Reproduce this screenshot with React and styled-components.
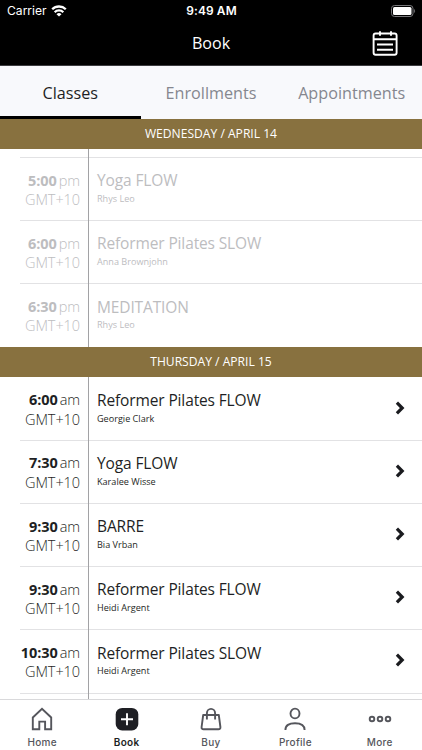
import React from "react";
import styled, { createGlobalStyle } from "styled-components";

const GlobalStyle = createGlobalStyle`
  * { box-sizing: border-box; }
  body { margin: 0; background: #fff; overflow: hidden; }
`;

const Screen = styled.div`
  width: 422px;
  height: 750px;
  display: flex;
  flex-direction: column;
  overflow: hidden;
  background: #fff;
  color: #1e1f24;
  font-family: "Open Sans", sans-serif;
`;

const StatusBar = styled.div`
  height: 22px;
  flex: none;
  display: grid;
  grid-template-columns: 1fr auto 1fr;
  align-items: center;
  padding: 0 6px 0 7px;
  background: #000;
  color: #fff;
  font: 400 12.1px/22px Inter, sans-serif;
`;

const Carrier = styled.div`
  display: flex;
  align-items: center;
  gap: 4px;
`;

const Clock = styled.div`
  font-size: 11.9px;
  font-weight: 600;
  letter-spacing: 0.15px;
`;

const Battery = styled.svg`
  justify-self: end;
  margin-bottom: 1px;
`;

const NavBar = styled.header`
  height: 44px;
  flex: none;
  display: grid;
  grid-template-columns: 1fr auto 1fr;
  align-items: center;
  padding: 0 23px;
  background: #000;
  color: #fff;
  border-bottom: 1px solid #3c3c40;
`;

const Title = styled.h1`
  grid-column: 2;
  margin: 0 0 1px;
  font-size: 16.1px;
  font-weight: 400;
  line-height: 22px;
`;

const CalendarButton = styled.button`
  justify-self: end;
  display: flex;
  padding: 0;
  border: 0;
  background: none;
`;

const Tabs = styled.nav`
  height: 52.5px;
  flex: none;
  display: grid;
  grid-template-columns: repeat(3, 1fr);
  background: #f8f9fc;
`;

const Tab = styled.div`
  display: flex;
  justify-content: center;
  padding-top: 15px;
  font-size: 16.2px;
  line-height: 24px;
  color: ${(p) => (p.$active ? "#1e1f24" : "#85878f")};
  border-bottom: 3px solid ${(p) => (p.$active ? "#000" : "transparent")};
`;

const DayHeader = styled.h2`
  height: 30.5px;
  flex: none;
  margin: 0;
  background: #88713f;
  color: #fff;
  text-align: center;
  font-size: 12.1px;
  font-weight: 400;
  line-height: 30px;
`;

const Schedule = styled.main`
  flex: 1;
  min-height: 0;
  overflow: hidden;
`;

const Row = styled.div`
  height: ${(p) => p.$height || 63.1}px;
  display: grid;
  grid-template-columns: 89px 1fr 34px;
  background: ${(p) =>
    p.$noRule ? "none" : "linear-gradient(#e2e2e4, #e2e2e4) 20px 0 / 402px 1px no-repeat"};
  color: ${(p) => (p.$past ? "#bdbdbf" : "#1e1f24")};
`;

const TimeCell = styled.div`
  padding: 13.3px 8px 0 0;
  border-right: 1px solid #a2a2a5;
  text-align: right;
  font-size: 14.5px;
  letter-spacing: -0.08px;
  font-weight: 300;
  line-height: 19.3px;
  white-space: nowrap;
`;

const Hour = styled.span`
  font-weight: 700;
  margin-right: 2px;
`;

const Details = styled.div`
  padding: 13.1px 0 0 8px;
`;

const ClassName = styled.div`
  font-size: 15.5px;
  letter-spacing: -0.13px;
  line-height: 20px;
`;

const Teacher = styled.div`
  padding-top: 0.7px;
  font-size: 9.1px;
  line-height: 16px;
`;

const Arrow = styled.svg`
  margin-top: 24px;
  margin-left: 7px;
`;

const TabBar = styled.nav`
  height: 51px;
  flex: none;
  display: grid;
  grid-template-columns: repeat(5, 1fr);
  border-top: 1px solid #d9d9db;
  background: #fff;
`;

const TabItem = styled.div`
  display: flex;
  flex-direction: column;
  align-items: center;
  padding-top: 7px;
  color: ${(p) => (p.$active ? "#1e1f24" : "#55565c")};
  font: ${(p) => (p.$active ? 600 : 500)} 10px/14px Inter, sans-serif;
  letter-spacing: 0.3px;
`;

const TabIcon = styled.svg`
  margin-bottom: 4px;
  fill: none;
  stroke: currentColor;
  stroke-width: 1.9;
`;

const icons = {
  Home: <path d="M2.8 10.5 12 1.7l9.2 8.8v11.8h-6.1v-7.7H9.3v7.7H2.8z" />,
  Book: (
    <>
      <rect x=".7" y=".9" width="22.6" height="22.6" rx="6.5" fill="currentColor" stroke="none" />
      <path d="M12 6.2v12M6 12.2h12" stroke="#fff" />
    </>
  ),
  Buy: (
    <>
      <path d="M4.2 8h15.6l1.6 12q.3 2.300-2 2.300H4.600q-2.300 0-2-2.300z" strokeLinejoin="round" />
      <path d="M7.900 12.500V6.200a4.100 4.300 0 0 1 8.200 0v6.300" />
    </>
  ),
  Profile: (
    <>
      <ellipse cx="12" cy="6.5" rx="4.5" ry="4.9" />
      <path d="M2.4 23c0-4.600 3.500-6.800 9.600-6.800s9.600 2.200 9.600 6.800" />
    </>
  ),
  More: (
    <>
      <circle cx="4" cy="12" r="2.3" />
      <circle cx="12" cy="12" r="2.3" />
      <circle cx="20" cy="12" r="2.3" />
    </>
  ),
};

const wednesday = [
  ["5:00", "pm", "Yoga FLOW", "Rhys Leo"],
  ["6:00", "pm", "Reformer Pilates SLOW", "Anna Brownjohn"],
  ["6:30", "pm", "MEDITATION", "Rhys Leo"],
];

const thursday = [
  ["6:00", "am", "Reformer Pilates FLOW", "Georgie Clark"],
  ["7:30", "am", "Yoga FLOW", "Karalee Wisse"],
  ["9:30", "am", "BARRE", "Bia Vrban"],
  ["9:30", "am", "Reformer Pilates FLOW", "Heidi Argent"],
  ["10:30", "am", "Reformer Pilates SLOW", "Heidi Argent"],
];

function ClassRow({ item, past, noRule }) {
  const [hour, period, name, teacher] = item;
  return (
    <Row $past={past} $noRule={noRule}>
      <TimeCell>
        <div><Hour>{hour}</Hour>{period}</div>
        <div>GMT+10</div>
      </TimeCell>
      <Details>
        <ClassName>{name}</ClassName>
        <Teacher>{teacher}</Teacher>
      </Details>
      {!past && (
        <Arrow width="12" height="14" viewBox="0 0 12 14" fill="none" stroke="#1a1b1f" strokeWidth="3.2">
          <path d="M1.9 1.7 7.2 7l-5.3 5.3" />
        </Arrow>
      )}
    </Row>
  );
}

export default function App() {
  return (
    <Screen>
      <GlobalStyle />
      <StatusBar>
        <Carrier>
          Carrier
          <svg width="16" height="12" viewBox="0 0 16 12" fill="none" stroke="#fff" strokeWidth="2.3">
            <path d="M1.2 4.3a9.7 9.7 0 0 1 13.6 0M3.7 7.2a6 6 0 0 1 8.600 0" />
            <path d="M8 11.600 5.500 9.200a3.500 3.500 0 0 1 5 0z" fill="#fff" stroke="none" />
          </svg>
        </Carrier>
        <Clock>9:49 AM</Clock>
        <Battery width="25" height="12" viewBox="0 0 25 12">
          <rect x=".5" y=".5" width="21.5" height="11" rx="3" fill="none" stroke="#77777a" />
          <rect x="2" y="2" width="18.5" height="8" rx="1.5" fill="#fff" />
          <path d="M23.2 4v4c1.2-.5 1.2-3.5 0-4z" fill="#77777a" />
        </Battery>
      </StatusBar>
      <NavBar>
        <Title>Book</Title>
        <CalendarButton aria-label="Calendar">
          <svg width="28" height="26" viewBox="0 0 28 26" fill="none" stroke="#fff" strokeWidth="1.9">
            <rect x="2.6" y="2.5" width="23" height="21.3" rx="2" />
            <path d="M2.6 8.3h23M9 .3v4.4M20 .3v4.4M6 13.5h16M6 18.7h16" />
          </svg>
        </CalendarButton>
      </NavBar>
      <Tabs>
        <Tab $active>Classes</Tab>
        <Tab>Enrollments</Tab>
        <Tab>Appointments</Tab>
      </Tabs>
      <Schedule>
        <DayHeader>WEDNESDAY / APRIL 14</DayHeader>
        <Row $height={8.3} $noRule><TimeCell /></Row>
        {wednesday.map((item) => <ClassRow key={item[0]} item={item} past />)}
        <DayHeader>THURSDAY / APRIL 15</DayHeader>
        {thursday.map((item, i) => <ClassRow key={i} item={item} noRule={i === 0} />)}
        <Row><TimeCell /></Row>
      </Schedule>
      <TabBar>
        {Object.entries(icons).map(([label, icon]) => (
          <TabItem key={label} $active={label === "Book"}>
            <TabIcon width="24" height="24" viewBox="0 0 24 24">{icon}</TabIcon>
            {label}
          </TabItem>
        ))}
      </TabBar>
    </Screen>
  );
}
